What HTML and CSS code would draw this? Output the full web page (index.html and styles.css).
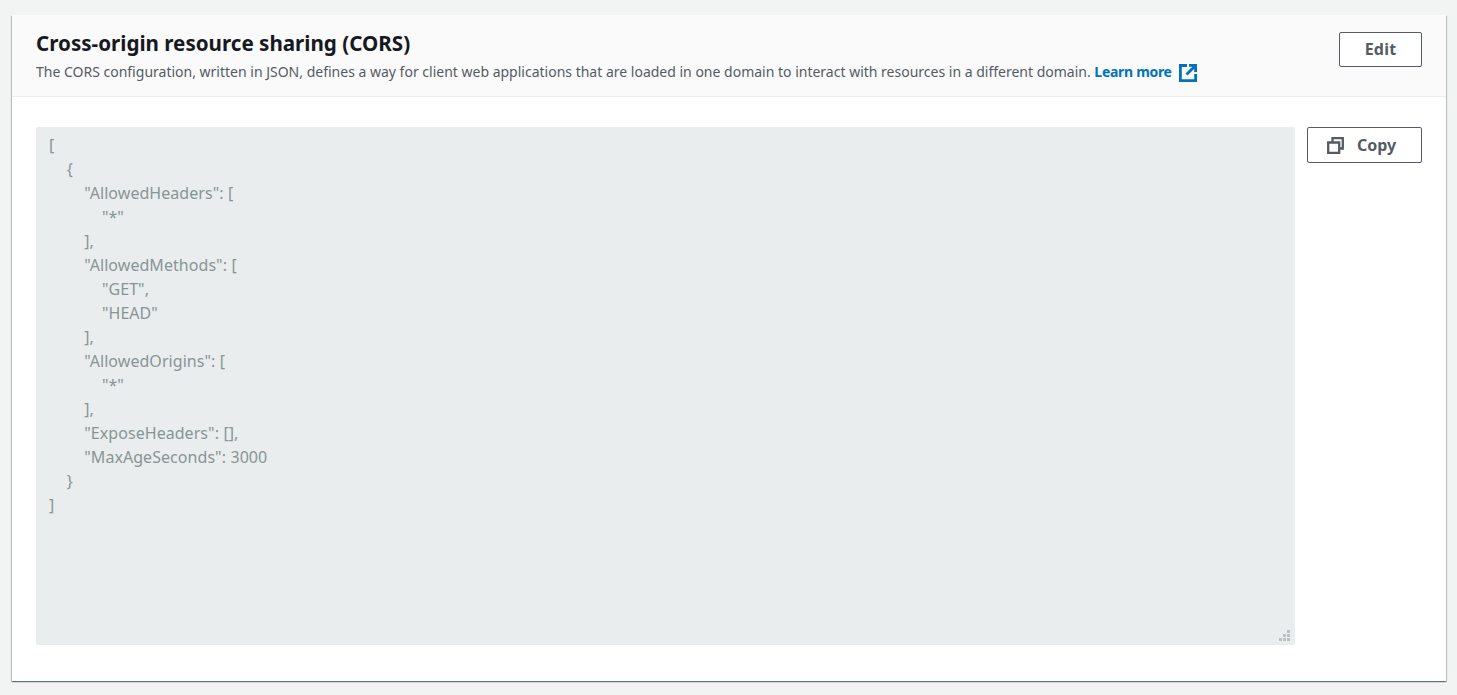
FILE: index.html
```html
<!DOCTYPE html>
<html lang="en">
<head>
<meta charset="utf-8">
<title>CORS</title>
<link rel="stylesheet" href="styles.css">
</head>
<body>
<section class="card">
  <header class="card-header">
    <div class="heading">
      <h2 class="title">Cross-origin resource sharing (CORS)</h2>
      <p class="desc">The CORS configuration, written in JSON, defines a way for client web applications that are loaded in one domain to interact with resources in a different domain. <a class="link" href="#">Learn more<svg class="ext-icon" viewBox="0 0 18 18" aria-hidden="true"><path d="M8 1.5H1.4v15.1h15.2V10" fill="none" stroke="#0073bb" stroke-width="2.8"/><path d="M10 1.4h6.6V8M15.8 2.2 7.5 10.5" fill="none" stroke="#0073bb" stroke-width="2.8"/></svg></a></p>
    </div>
    <button class="btn btn-edit" type="button">Edit</button>
  </header>
  <div class="card-body">
    <div class="code-box">
<pre class="code">[
    {
        "AllowedHeaders": [
            "*"
        ],
        "AllowedMethods": [
            "GET",
            "HEAD"
        ],
        "AllowedOrigins": [
            "*"
        ],
        "ExposeHeaders": [],
        "MaxAgeSeconds": 3000
    }
]</pre>
      <svg class="grip" viewBox="0 0 12 12" aria-hidden="true"><path d="M8 0h3v3H8zM4 4h3v3H4zM8 4h3v3H8zM0 8h3v3H0zM4 8h3v3H4zM8 8h3v3H8z" fill="#bcc1c3"/></svg>
    </div>
    <button class="btn btn-copy" type="button"><svg class="copy-icon" viewBox="0 0 17 17" aria-hidden="true"><path d="M5.5 4.5V1.2h10.3v10.3h-3.3M1.2 5.5h11v10.3H1.2z" fill="none" stroke="#545b64" stroke-width="2.3"/></svg>Copy</button>
  </div>
</section>
</body>
</html>
```
FILE: styles.css
```css
* { box-sizing: border-box; }
html, body { height: 100%; }
body {
  margin: 0;
  padding: 15px 11px 13px 12px;
  background: #f2f3f3;
  font-family: "Noto Sans", "Open Sans", sans-serif;
  color: #16191f;
  overflow: hidden;
}
.card {
  height: 666px;
  background: #fff;
  box-shadow: 0 1px 1px 0 rgba(0, 28, 36, .4), 1px 1px 1px 0 rgba(0, 28, 36, .18), -1px 1px 1px 0 rgba(0, 28, 36, .18);
  display: flex;
  flex-direction: column;
}
.card-header {
  height: 82px;
  flex: none;
  display: flex;
  justify-content: space-between;
  align-items: flex-start;
  background: #fafafa;
  border-bottom: 1px solid #eaeded;
  padding: 16px 24px 0;
}
.title {
  margin: 0;
  font-size: 20.6px;
  line-height: 24px;
  font-weight: 700;
  color: #16191f;
}
.desc {
  margin: 7px 0 0;
  font-size: 14px;
  line-height: 20px;
  color: #545b64;
}
.link {
  color: #0073bb;
  font-weight: 700;
  letter-spacing: -.3px;
  text-decoration: none;
}
.ext-icon {
  width: 18px;
  height: 18px;
  margin-left: 7px;
  vertical-align: -5px;
}
.btn {
  background: #fff;
  border: 1px solid #545b64;
  border-radius: 2px;
  color: #545b64;
  font-family: inherit;
  font-size: 16px;
  font-weight: 700;
  line-height: 20px;
  padding: 0;
}
.btn-edit {
  width: 83px;
  height: 35px;
  margin-top: 1px;
  padding-bottom: 2px;
  letter-spacing: .2px;
}
.card-body {
  flex: 1;
  display: flex;
  align-items: flex-start;
  gap: 12px;
  padding: 30px 24px 0;
}
.code-box {
  position: relative;
  flex: 1;
  height: 518px;
  background: #eaeded;
  border-radius: 2px;
  padding: 6px 13px;
}
.code {
  margin: 0;
  font-family: "Noto Sans", "Open Sans", sans-serif;
  font-size: 16px;
  line-height: 24px;
  letter-spacing: .05px;
  word-spacing: .2px;
  color: #879596;
}
.grip {
  position: absolute;
  right: 4px;
  bottom: 3px;
  width: 12px;
  height: 12px;
}
.btn-copy {
  width: 115px;
  height: 36px;
  display: flex;
  align-items: center;
  justify-content: center;
  gap: 13px;
  padding-right: 6px;
}
.copy-icon {
  width: 17px;
  height: 17px;
}
```
